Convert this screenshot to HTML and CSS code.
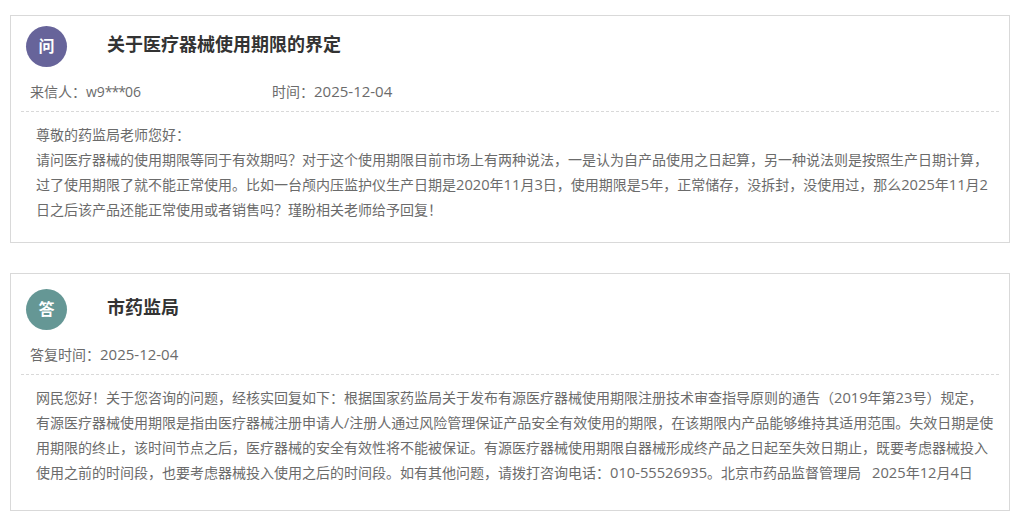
FILE: index.html
```html
<!DOCTYPE html>
<html lang="zh-CN">
<head>
<meta charset="utf-8">
<title>关于医疗器械使用期限的界定</title>
<link rel="stylesheet" href="styles.css">
</head>
<body>
<main class="page">
  <section class="card card-q">
    <header class="head">
      <span class="badge badge-q">问</span>
      <h2 class="title">关于医疗器械使用期限的界定</h2>
    </header>
    <div class="meta">
      <span class="meta-from">来信人：w9<span class="stars">***</span>06</span>
      <span>时间：<span class="num">2025-12-04</span></span>
    </div>
    <div class="body">
      <p>尊敬的药监局老师您好：</p>
      <p>请问医疗器械的使用期限等同于有效期吗？对于这个使用期限目前市场上有两种说法，一是认为自产品使用之日起算，另一种说法则是按照生产日期计算，过了使用期限了就不能正常使用。比如一台颅内压监护仪生产日期是<span class="num">2020</span>年<span class="num">11</span>月<span class="num">3</span>日，使用期限是<span class="num">5</span>年，正常储存，没拆封，没使用过，那么<span class="num">2025</span>年<span class="num">11</span>月<span class="num">2</span>日之后该产品还能正常使用或者销售吗？瑾盼相关老师给予回复！</p>
    </div>
  </section>
  <section class="card card-a">
    <header class="head">
      <span class="badge badge-a">答</span>
      <h2 class="title">市药监局</h2>
    </header>
    <div class="meta">
      <span>答复时间：<span class="num">2025-12-04</span></span>
    </div>
    <div class="body">
      <p>网民您好！关于您咨询的问题，经核实回复如下：根据国家药监局关于发布有源医疗器械使用期限注册技术审查指导原则的通告（<span class="num">2019</span>年第<span class="num">23</span>号）规定，有源医疗器械使用期限是指由医疗器械注册申请人/注册人通过风险管理保证产品安全有效使用的期限，在该期限内产品能够维持其适用范围。失效日期是使用期限的终止，该时间节点之后，医疗器械的安全有效性将不能被保证。有源医疗器械使用期限自器械形成终产品之日起至失效日期止，既要考虑器械投入使用之前的时间段，也要考虑器械投入使用之后的时间段。如有其他问题，请拨打咨询电话：<span class="num">010-55526935</span>。北京市药品监督管理局&nbsp;&nbsp; <span class="num">2025</span>年<span class="num">12</span>月<span class="num">4</span>日</p>
    </div>
  </section>
</main>
</body>
</html>
```
FILE: styles.css
```css
* { box-sizing: border-box; }
html, body { margin: 0; background: #fff; }
body {
  font-family: "Open Sans", "Noto Sans CJK SC", sans-serif;
  color: #6b6b6b;
  font-size: 14px;
  overflow: hidden;
}
.page {
  width: 1000px;
  margin-left: 10px;
  padding-top: 15px;
  display: flex;
  flex-direction: column;
  gap: 30px;
}
.card {
  border: 1px solid #d9d9d9;
  padding: 0 10px;
}
.card-q { height: 228px; padding-top: 10px; }
.card-a { height: 238px; padding-top: 15px; }
.head {
  display: flex;
  align-items: center;
  padding-left: 5px;
  height: 41px;
}
.badge {
  width: 41px;
  height: 41px;
  border-radius: 50%;
  color: #fff;
  font-size: 16px;
  font-weight: 700;
  line-height: 41px;
  text-align: center;
  flex: none;
}
.badge-q { background: #67649a; }
.badge-a { background: #659795; }
.title {
  margin: 0 0 0 40px;
  font-size: 18px;
  font-weight: 700;
  color: #333;
  line-height: 24px;
  position: relative;
  top: -3px;
}
.meta {
  display: flex;
  height: 45px;
  align-items: center;
  padding: 4px 0 0 9px;
  border-bottom: 1px dashed #d9d9d9;
}
.meta-from { width: 242px; }
.num { font-size: 15px; line-height: 1; }
.stars { letter-spacing: -1px; }
.body {
  padding: 10px 5px 0 15px;
  font-size: 14px;
  line-height: 25px;
}
.body .num { font-size: 14.7px; }
.body p { margin: 0; }
```
